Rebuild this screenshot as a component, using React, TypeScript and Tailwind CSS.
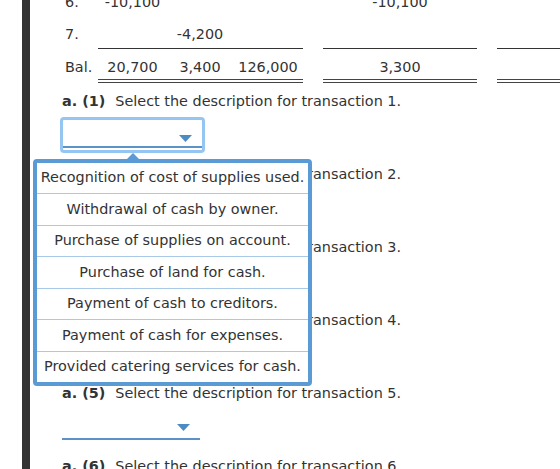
import React from 'react';

const options = [
  'Recognition of cost of supplies used.',
  'Withdrawal of cash by owner.',
  'Purchase of supplies on account.',
  'Purchase of land for cash.',
  'Payment of cash to creditors.',
  'Payment of cash for expenses.',
  'Provided catering services for cash.',
];

const cols = 'grid grid-cols-[36px_69px_66px_70px_20px_154px_20px_100px]';

function Caret() {
  return (
    <svg width="13" height="7" viewBox="0 0 13 7" className="absolute right-[10px] top-[15px]">
      <path d="M0 0 H13 L6.5 7 Z" fill="#4d8bc4" />
    </svg>
  );
}

function Question({ n, focused }: { n: number; focused?: boolean }) {
  return (
    <div className="h-[73px]">
      <div className="h-[20px] leading-[20px] whitespace-nowrap">
        <span className="font-bold">a. ({n})</span>
        <span className="ml-[10px]">Select the description for transaction {n}.</span>
      </div>
      {focused ? (
        <div className="mt-[6px] -ml-[2px] w-[145px] h-[36px] rounded-[4px] border-[3px] border-[#95c6f2] bg-white">
          <div className="relative h-[28px] border-b-2 border-[#5b93c8]">
            <Caret />
          </div>
        </div>
      ) : (
        <div className="relative mt-[6px] w-[138px] h-[31px] border-b-2 border-[#5b93c8]">
          <Caret />
        </div>
      )}
    </div>
  );
}

export default function App() {
  return (
    <div className="flex h-[469px] overflow-hidden bg-white text-[14.4px] text-[#333] font-['DejaVu_Sans',sans-serif]">
      <div className="w-[22px] shrink-0" />
      <div className="w-[8px] shrink-0 bg-[#333]" />

      <div className="relative flex-1 pl-[32px]">
        {/* Balance table */}
        <div className="-mt-[16px] leading-[20px] whitespace-nowrap">
          <div className={`${cols} h-[33px] pt-[8px]`}>
            <div className="pl-[3px]">6.</div>
            <div className="text-center">-10,100</div>
            <div />
            <div />
            <div />
            <div className="text-center">-10,100</div>
            <div />
            <div />
          </div>
          <div className={`${cols} h-[32px]`}>
            <div className="pl-[3px] pt-[7px]">7.</div>
            <div className="border-b border-[#333]" />
            <div className="border-b border-[#333] pt-[7px] text-center">-4,200</div>
            <div className="border-b border-[#333]" />
            <div />
            <div className="border-b border-[#333]" />
            <div />
            <div className="border-b border-[#333]" />
          </div>
          <div className={`${cols} h-[34px]`}>
            <div className="pl-[3px] pt-[8px]">Bal.</div>
            <div className="border-b-4 border-double border-[#444] pt-[8px] text-center">20,700</div>
            <div className="border-b-4 border-double border-[#444] pt-[8px] text-center">3,400</div>
            <div className="border-b-4 border-double border-[#444] pt-[8px] text-center">126,000</div>
            <div />
            <div className="border-b-4 border-double border-[#444] pt-[8px] text-center">3,300</div>
            <div />
            <div className="border-b-4 border-double border-[#444]" />
          </div>
        </div>

        <div className="mt-[8px]">
          <Question n={1} focused />
          <Question n={2} />
          <Question n={3} />
          <Question n={4} />
          <Question n={5} />
          <Question n={6} />
        </div>

        {/* Open option list for transaction 1 */}
        <svg width="14" height="7" viewBox="0 0 14 7" className="absolute left-[96px] top-[153px]">
          <path d="M0 7 L7 0 L14 7 Z" fill="#5b9bd5" />
        </svg>
        <div className="absolute left-[3px] top-[159px] w-[279px] h-[227px] rounded-[4px] border-4 border-[#5b9bd5] bg-white flex flex-col">
          {options.map((o, i) => (
            <div
              key={o}
              className={`flex-1 flex items-center justify-center whitespace-nowrap ${i < options.length - 1 ? 'border-b border-[#a9c9e8]' : ''}`}
            >
              {o}
            </div>
          ))}
        </div>
      </div>
    </div>
  );
}
